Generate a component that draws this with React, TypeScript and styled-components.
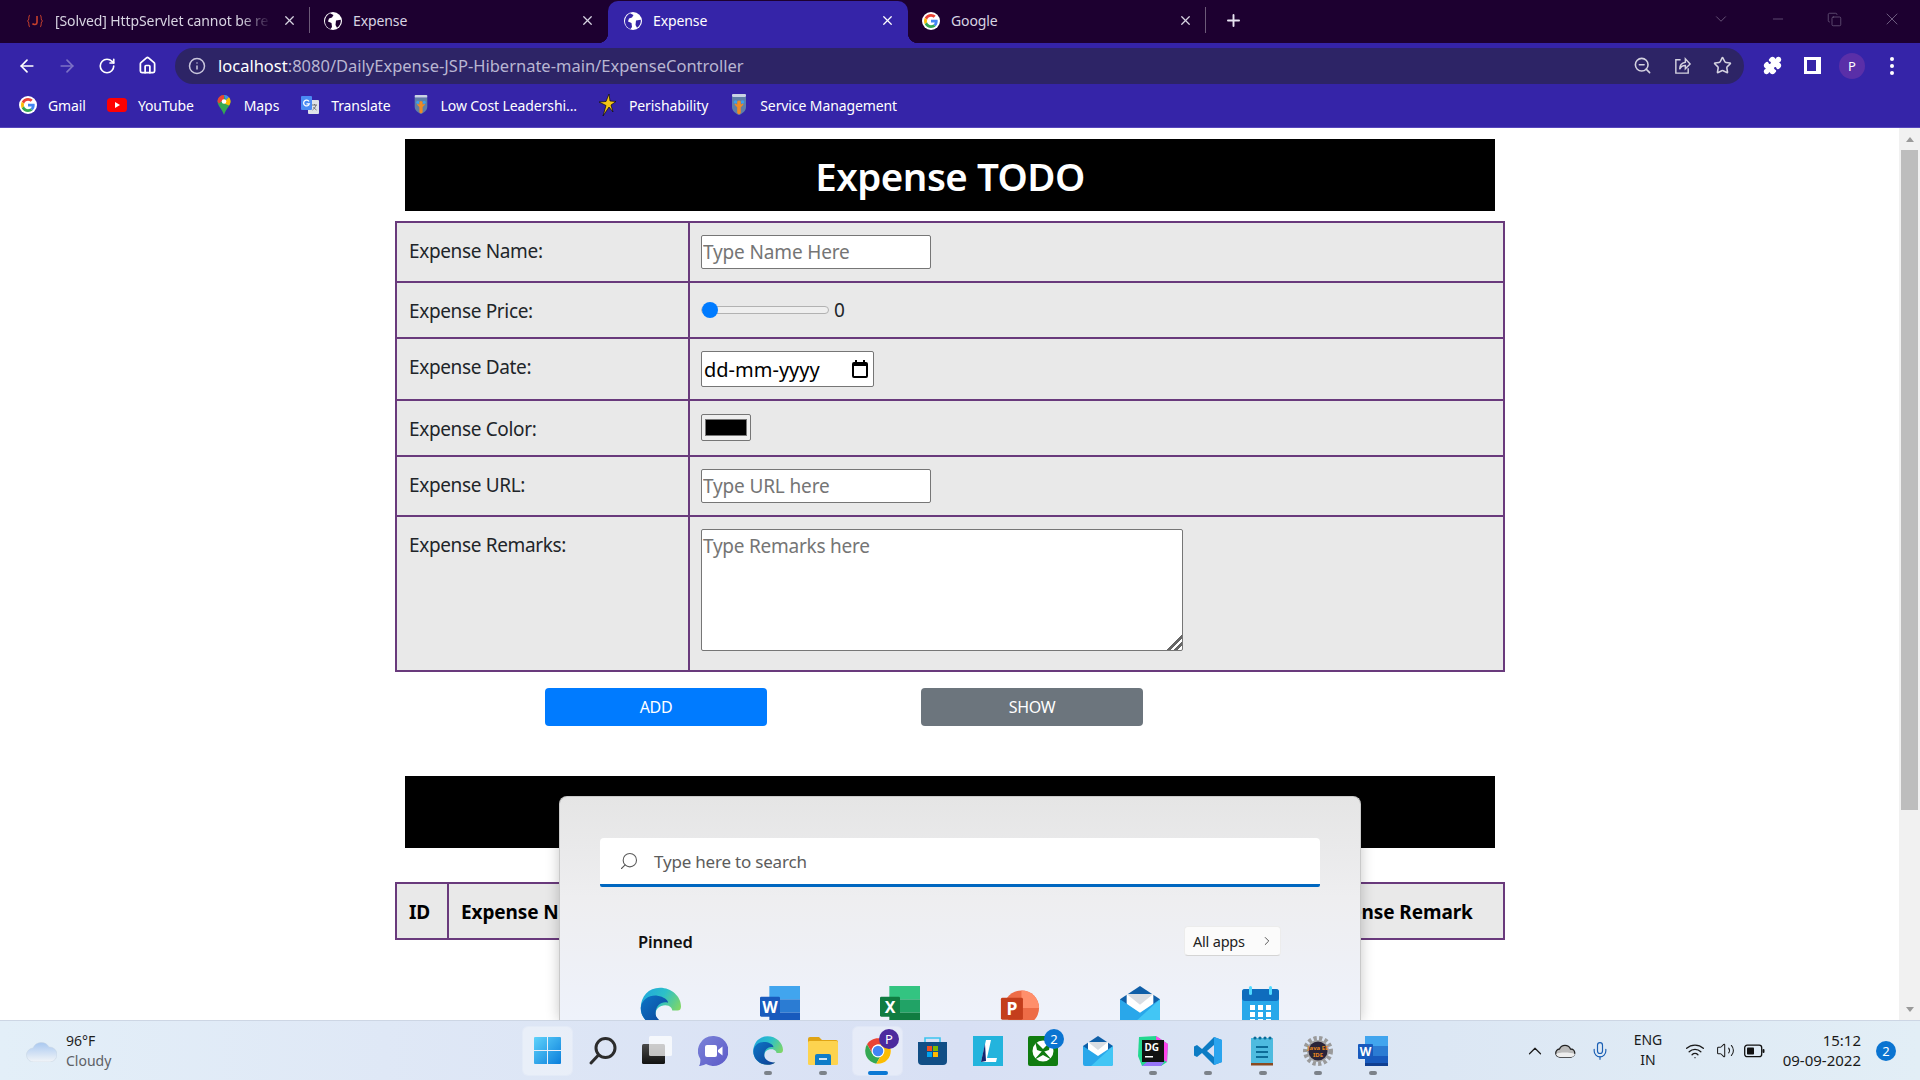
import React from "react";
import styled, { createGlobalStyle } from "styled-components";
import {
  ArrowLeft, ArrowRight, RotateCw, Home, Info, ZoomOut, Star, X, Plus, Minus, ChevronDown, ChevronUp, ChevronRight,
  Copy, Mic, Wifi, Volume2, Search, Puzzle,
} from "lucide-react";

const GlobalStyle = createGlobalStyle`
  html, body { margin: 0; padding: 0; height: 1080px; overflow: hidden; background: #fff; }
  * { box-sizing: border-box; }
  body { font-family: "Noto Sans", "Open Sans", sans-serif; }
`;

const Screen = styled.div`
  position: relative; width: 1920px; height: 1080px; overflow: hidden;
  display: flex; flex-direction: column; background: #fff;
`;

/* ---------- browser chrome ---------- */
const TabStrip = styled.div`
  height: 43px; flex: none; background: #1d0030; display: flex; padding: 1px 0 0 12px; color: #e8e4f2;
`;
const Tab = styled.div<{ $active?: boolean; $sep?: boolean; $w?: number }>`
  position: relative; width: ${p => p.$w ?? 298}px; height: 42px; display: flex; align-items: center; padding: 0 13px 3px ${p => (p.$active ? 16 : 14)}px; gap: 11px;
  font-size: 14px; letter-spacing: -0.1px;
  background: ${p => (p.$active ? "#3524a8" : "transparent")};
  border-radius: ${p => (p.$active ? "10px 10px 0 0" : "0")};
  color: ${p => (p.$active ? "#fff" : "#d8d4e2")};
  &::after {
    content: ""; position: absolute; right: 0; top: 6px; bottom: 10px; width: 1px;
    background: ${p => (p.$sep ? "#6c5a78" : "transparent")};
  }
`;
const TabFlare = styled.span<{ $side: "left" | "right" }>`
  position: absolute; bottom: 0; width: 10px; height: 10px;
  ${p => (p.$side === "left" ? "left: -10px" : "right: -10px")};
  background: radial-gradient(circle at ${p => (p.$side === "left" ? "0 0" : "100% 0")}, transparent 10px, #3524a8 10.5px);
`;
const TabTitle = styled.span<{ $fade?: boolean }>`
  flex: 1; white-space: nowrap; overflow: hidden;
  ${p => (p.$fade ? "mask-image: linear-gradient(90deg, #000 86%, transparent 100%);" : "")}
`;
const NewTab = styled.div`
  width: 54px; height: 42px; padding-bottom: 3px; display: flex; align-items: center; justify-content: center; color: #e8e4f2;
`;
const WindowControls = styled.div`
  margin: -2px 0 0 auto; display: flex; height: 40px; color: #7d6e8e;
`;
const WindowButton = styled.div`
  width: 57px; display: flex; align-items: center; justify-content: center;
`;

const Toolbar = styled.div`
  height: 45px; flex: none; background: #3524a8; display: flex; align-items: center; padding: 0 8px 0 7px; color: #fff;
`;
const ToolButton = styled.div<{ $dim?: boolean }>`
  width: 40px; height: 38px; flex: none; display: flex; align-items: center; justify-content: center;
  color: ${p => (p.$dim ? "#7d72c6" : "#fff")};
`;
const Omnibox = styled.div`
  flex: 1; margin: 0 8px; height: 36px; border-radius: 18px; background: #2d2466; display: flex; align-items: center;
  padding: 0 2px 0 13px; color: #c9c6dc;
`;
const UrlText = styled.div`
  margin-left: 12px; font-size: 16.5px; color: #b9b6d2; flex: 1; white-space: nowrap;
`;
const UrlHost = styled.span`color: #fff;`;
const OmniAction = styled.div`
  width: 40px; height: 32px; flex: none; display: flex; align-items: center; justify-content: center; color: #d4d2e0;
`;
const Avatar = styled.div`
  width: 26px; height: 26px; border-radius: 50%; background: #5a2fa8; color: #fff; font-size: 13px;
  display: flex; align-items: center; justify-content: center;
`;
const MenuDots = styled.div`
  display: flex; flex-direction: column; gap: 3px;
`;
const Dot = styled.span`
  width: 4px; height: 4px; border-radius: 50%; background: #fff;
`;
const PanelIcon = styled.div`
  width: 17px; height: 17px; border: 3px solid #fff; border-right-width: 5px; background: transparent;
`;

const BookmarkBar = styled.div`
  height: 40px; flex: none; background: #3524a8; border-bottom: 1px solid #5646bc; display: flex; align-items: center;
  padding: 0 0 5px 19px; gap: 21px; color: #fff; font-size: 14px; letter-spacing: -0.1px;
`;
const Bookmark = styled.div`
  display: flex; align-items: center; gap: 11px; white-space: nowrap;
`;

/* ---------- page ---------- */
const Viewport = styled.div`
  flex: 1; min-height: 0; display: flex; background: #fff;
`;
const Page = styled.main`
  flex: 1; overflow: hidden; display: flex; justify-content: center; align-items: flex-start; padding-left: 1px;
`;
const Container = styled.div`
  width: 1110px; padding-top: 11px; color: #212529; font-size: 19px; letter-spacing: -0.35px;
`;
const Heading = styled.h1`
  margin: 0 10px; height: 72px; background: #000; color: #fff; font-size: 38.5px; font-weight: 600; line-height: 74px; letter-spacing: -0.5px;
  text-align: center;
`;
const FormTable = styled.table`
  width: 100%; margin-top: 10px; border-collapse: collapse; table-layout: fixed; border: 2px solid #693a7c;
`;
const Row = styled.tr<{ $h: number }>`
  height: ${p => p.$h}px;
`;
const Cell = styled.td`
  border: 2px solid #693a7c; background: #e9e9e9; vertical-align: top; padding: 12px 11px 0;
`;
const LabelCell = styled(Cell)`
  width: 293px; line-height: 32px; padding-left: 12px;
`;
const TextField = styled.input`
  display: block; width: 230px; height: 34px; border: 1px solid #767676; border-radius: 2px; background: #fff; padding: 0 1px;
  font: inherit; letter-spacing: -0.15px; margin: 0;
  &::placeholder { color: #757575; opacity: 1; }
`;
const SliderRow = styled.div`
  height: 30px; display: flex; align-items: center; gap: 5px;
`;
const Slider = styled.input`
  appearance: none; -webkit-appearance: none; width: 128px; height: 16px; margin: 0; background: transparent;
  &::-webkit-slider-runnable-track { height: 8px; border: 1px solid #b2b2b2; border-radius: 4px; background: #efefef; }
  &::-webkit-slider-thumb { -webkit-appearance: none; width: 16px; height: 16px; margin-top: -5px; border-radius: 50%; background: #007bff; }
`;
const DateField = styled.div`
  width: 173px; height: 36px; border: 1px solid #767676; border-radius: 2px; background: #fff; display: flex; align-items: center;
  justify-content: space-between; padding: 0 5px 0 2px; color: #000; font-size: 20px; letter-spacing: 0;
`;
const ColorField = styled.div`
  width: 50px; height: 27px; margin-top: 1px; border: 1px solid #767676; border-radius: 2px; background: #efefef;
  padding: 4px 3px;
`;
const Swatch = styled.div`
  height: 100%; background: #000; border: 1px solid #777;
`;
const RemarksField = styled.textarea`
  display: block; width: 482px; height: 122px; border: 1px solid #767676; border-radius: 2px; background: #fff; padding: 0 1px;
  font: inherit; letter-spacing: -0.25px; margin: 0; line-height: 32px;
  &::placeholder { color: #757575; opacity: 1; }
  &::-webkit-resizer {
    background: linear-gradient(135deg, transparent 48%, #666 48%, #666 60%, transparent 60%, transparent 72%, #666 72%, #666 84%, transparent 84%);
  }
`;
const ActionRow = styled.div`
  display: flex; gap: 154px; margin-top: 16px; padding-left: 150px;
`;
const ActionButton = styled.button<{ $tone: string }>`
  width: 222px; height: 38px; border: 0; border-radius: 4px; background: ${p => p.$tone}; color: #fff; font: inherit;
  font-size: 16px; letter-spacing: -0.3px; padding: 0;
`;
const ListHeading = styled(Heading)`
  margin-top: 50px;
`;
const ListTable = styled.table`
  width: 100%; margin-top: 34px; border-collapse: collapse; table-layout: fixed; border: 2px solid #693a7c;
`;
const HeadCell = styled.th<{ $w?: number }>`
  ${p => (p.$w ? `width: ${p.$w}px;` : "")}
  height: 56px; border: 2px solid #693a7c; background: #e9e9e9; color: #000; font-weight: 700; font-size: 19px; letter-spacing: -0.1px; text-align: left; padding: 2px 12px 0; white-space: nowrap; overflow: hidden;
`;

/* ---------- scrollbar ---------- */
const Scrollbar = styled.div`
  width: 21px; flex: none; background: #f1f1f1; display: flex; flex-direction: column;
`;
const ScrollArrow = styled.div<{ $down?: boolean }>`
  height: 22px; flex: none; display: flex; align-items: center; justify-content: center;
  ${p => (p.$down ? "margin-top: auto;" : "")}
  &::before {
    content: ""; border-left: 4.5px solid transparent; border-right: 4.5px solid transparent;
    ${p => (p.$down ? "border-top: 5px solid #9a9a9a;" : "border-bottom: 5px solid #9a9a9a;")}
  }
`;
const ScrollThumb = styled.div`
  margin: 0 2px; height: 660px; background: #bdbdbd;
`;

/* ---------- start menu ---------- */
const StartMenu = styled.aside`
  position: absolute; left: 559px; bottom: 60px; width: 802px; height: 224px; overflow: hidden;
  border: 1px solid #c9c9c9; border-bottom: 0; border-radius: 8px 8px 0 0; padding: 41px 40px 0;
  background: linear-gradient(180deg, #e5e5e5 0%, #eeeef0 45%, #eef2fb 100%);
  box-shadow: 0 0 14px rgba(0,0,0,.22);
`;
const StartSearch = styled.div`
  height: 49px; background: #fff; border-radius: 4px 4px 2px 2px; border-bottom: 3px solid #0067c0; display: flex; align-items: center;
  padding: 0 0 0 19px; gap: 15px; font-size: 17px; letter-spacing: -0.2px; color: #5c5c5c;
`;
const PinnedHeader = styled.div`
  margin-top: 39px; height: 30px; display: flex; align-items: center; justify-content: space-between; padding: 0 39px 0 38px; color: #111;
  font-size: 16.5px; font-weight: 600; letter-spacing: -0.2px;
`;
const AllApps = styled.div`
  width: 97px; height: 30px; background: #fbfbfb; border: 1px solid #ececec; border-bottom-color: #d4d4d4; border-radius: 4px; display: flex; align-items: center;
  justify-content: space-between; padding: 0 6px 0 8px; font-size: 14.5px; font-weight: 400; letter-spacing: -0.2px; color: #222;
`;
const PinnedGrid = styled.div`
  margin-top: 30px; display: grid; grid-template-columns: repeat(6, 120px); justify-items: center;
`;

/* ---------- taskbar ---------- */
const Taskbar = styled.footer`
  height: 60px; flex: none; position: relative; display: grid; grid-template-columns: 1fr auto 1fr; align-items: center;
  background: linear-gradient(90deg, #e3eff8 0%, #dfe8f6 20%, #d8e0f4 50%, #dce7f4 75%, #e2eef6 100%);
  border-top: 1px solid #cdd6e4; color: #1a1a1a;
`;
const Weather = styled.div`
  display: flex; align-items: center; gap: 9px; padding-left: 26px; font-size: 14px; line-height: 20px;
`;
const WeatherText = styled.div`color: #1f1f1f;`;
const WeatherSub = styled.div`color: #5d6166;`;
const TaskIcons = styled.div`
  display: flex; gap: 6px;
`;
const TaskItem = styled.div<{ $active?: boolean }>`
  position: relative; width: 49px; height: 48px; display: flex; align-items: center; justify-content: center;
  border-radius: 5px;
  ${p => (p.$active ? "background: rgba(255,255,255,.35); box-shadow: 0 0 0 1px rgba(255,255,255,.2);" : "")}
`;
const RunDot = styled.span<{ $active?: boolean }>`
  position: absolute; bottom: 0; left: 50%; transform: translateX(-50%); height: 4px; border-radius: 2px;
  width: ${p => (p.$active ? 20 : 8)}px; background: ${p => (p.$active ? "#0b78d4" : "#7c8289")};
`;
const IconBadge = styled.span<{ $bg: string }>`
  position: absolute; top: 2px; right: 3px; width: 20px; height: 20px; border-radius: 50%; background: ${p => p.$bg};
  color: #fff; font-size: 13px; display: flex; align-items: center; justify-content: center;
`;
const Tray = styled.div`
  display: flex; align-items: center; justify-content: flex-end; padding-right: 9px; font-size: 14px;
`;
const TrayCell = styled.div<{ $w: number }>`
  width: ${p => p.$w}px; display: flex; align-items: center; justify-content: center;
`;
const TrayText = styled.div<{ $w: number; $right?: boolean; $size?: number }>`
  width: ${p => p.$w}px; margin-top: -2px; text-align: ${p => (p.$right ? "right" : "center")}; line-height: 20px; white-space: nowrap;
  font-size: ${p => p.$size ?? 14}px;
`;
const NoticeBadge = styled.div`
  width: 20px; height: 20px; border-radius: 50%; background: #0a74d1; color: #fff; font-size: 13px; display: flex; align-items: center; justify-content: center;
`;
const FlipSearch = styled(Search)`
  transform: scaleX(-1);
`;

/* ---------- drawn icons ---------- */
type P = { s?: number };
const Globe = ({ s = 18, c = "#1d0030" }: P & { c?: string }) => (
  <svg width={s} height={s} viewBox="0 0 18 18"><circle cx="9" cy="9" r="9" fill="#fff" /><path d="M6 1.2 9.5 3 8 5.5l-3 1-1 3 3.5 1.5L8 15l-1.5 2C3 16 1 12.6 1 9 1 5.8 3 2.8 6 1.2zM12 8.5l4.8-.7c.4 3-1 6.200-3.800 8L11.500 13z" fill={c} /></svg>
);
const GoogleG = ({ s = 18 }: P) => (
  <svg width={s} height={s} viewBox="-7 -7 62 62">
    <circle cx="24" cy="24" r="31" fill="#fff" />
    <path fill="#EA4335" d="M24 9.5c3.54 0 6.71 1.22 9.21 3.6l6.85-6.85C35.9 2.38 30.47 0 24 0 14.62 0 6.51 5.38 2.56 13.22l7.98 6.19C12.43 13.72 17.74 9.5 24 9.5z" />
    <path fill="#4285F4" d="M46.98 24.55c0-1.57-.15-3.09-.38-4.55H24v9.02h12.94c-.58 2.96-2.26 5.48-4.78 7.18l7.73 6c4.51-4.18 7.09-10.36 7.09-17.65z" />
    <path fill="#FBBC05" d="M10.53 28.59c-.48-1.45-.76-2.99-.76-4.59s.27-3.14.76-4.59l-7.98-6.19C.92 16.46 0 20.12 0 24c0 3.88.92 7.54 2.56 10.78l7.97-6.19z" />
    <path fill="#34A853" d="M24 48c6.48 0 11.93-2.13 15.89-5.81l-7.73-6c-2.15 1.45-4.92 2.3-8.16 2.3-6.26 0-11.57-4.22-13.47-9.91l-7.98 6.19C6.51 42.62 14.62 48 24 48z" />
  </svg>
);
const JFavicon = () => (
  <svg width="18" height="18" viewBox="0 0 18 18" fill="none" stroke="#c8402c" strokeWidth="1.6">
    <path d="M4 3C2.500 3 3 7 2.500 8 2.300 8.600 1.500 9 1.500 9s.8.400 1 1c.5 1 0 5 1.500 5" strokeWidth="1" />
    <path d="M14 3c1.500 0 1 4 1.500 5 .2.600 1 1 1 1s-.8.400-1 1c-.5 1 0 5-1.500 5" strokeWidth="1" />
    <path d="M11 4v6.500c0 2.500-3.500 2.500-4.500 1" />
  </svg>
);
const YouTube = () => (
  <svg width="20" height="14" viewBox="0 0 20 14"><rect width="20" height="14" rx="3.500" fill="#f00" /><path d="M8 4v6l5-3z" fill="#fff" /></svg>
);
const MapsPin = () => (
  <svg width="18" height="20" viewBox="0 0 18 20">
    <path d="M9 0a6.500 6.500 0 0 1 6.500 6.500c0 4.500-4.500 7-6.500 13.500C7 13.500 2.500 11 2.500 6.500A6.500 6.500 0 0 1 9 0z" fill="#34a853" />
    <path d="M4 2.200A6.500 6.500 0 0 1 9 0v4.500L4 8.500a5 5 0 0 1-1.500-2c0-1.700.5-3.100 1.500-4.300z" fill="#ea4335" />
    <path d="M9 0a6.500 6.500 0 0 1 5 2.200L11 5z" fill="#4285f4" /><path d="M14 2.200c1 1.200 1.500 2.600 1.500 4.300 0 1.500-.5 2.700-1.300 3.900L8 8z" fill="#fbbc04" />
    <circle cx="9" cy="6.500" r="2.300" fill="#fff" />
  </svg>
);
const TranslateIcon = () => (
  <svg width="20" height="20" viewBox="0 0 20 20">
    <rect x="8" y="5" width="11" height="14" rx="1" fill="#dfe3e8" /><rect x="1" y="1" width="11" height="14" rx="1" fill="#4a8af4" />
    <path d="M9 6.500a2.900 2.900 0 1 0 .3 2.400H6.500" fill="none" stroke="#fff" strokeWidth="1.300" /><path d="M12 10h5M14.500 9v1M16 10c-.5 2-2 4-3.500 5M13.500 12c.5 1 1.500 2 3 3" stroke="#666" strokeWidth=".9" fill="none" />
  </svg>
);
const ShieldPerson = ({ s = 20 }: P) => (
  <svg width={s} height="22" viewBox="0 0 20 22">
    <rect x="3" y="0" width="14" height="3" rx="1" fill="#c9d4e4" />
    <path d="M3 3h14v10c0 4-3.500 6.500-7 8-3.500-1.500-7-4-7-8z" fill="#5f7ea8" />
    <circle cx="6.500" cy="8" r="1.800" fill="#3aa0ee" /><circle cx="13.500" cy="8" r="1.800" fill="#3aa0ee" />
    <path d="M10 6.500c1.200 0 1.800.8 1.800 1.800v2.500l1.700-1.300 1 1-2.700 2.700V19L10 20.500 8.200 19v-5.800L5.500 10.500l1-1 1.700 1.300V8.300c0-1 .6-1.800 1.800-1.800z" fill="#f08a24" />
  </svg>
);
const PerishIcon = () => (
  <svg width="20" height="22" viewBox="0 0 18 22"><path d="M10 0l1 7 6 .5-5 3.500 2 7-4-5-6 9 3-10.500L0 8l7-.5z" fill="#f3c316" stroke="#0a0a0a" strokeWidth=".7" /></svg>
);
const ShareIcon = () => (
  <svg width="19" height="19" viewBox="0 0 20 20" fill="none" stroke="currentColor" strokeWidth="1.500"><path d="M8 4H3v14h13v-5" /><path d="M7 14c0-5 3-7 6-7.500V3l5 5.500-5 5V10c-3 0-5 1.500-6 4z" /></svg>
);
const WindowsLogo = () => (
  <svg width="29" height="29" viewBox="0 0 29 29"><defs><linearGradient id="w1" x1="0" y1="0" x2="1" y2="1"><stop offset="0" stopColor="#5fd3fb" /><stop offset="1" stopColor="#0a7edb" /></linearGradient></defs><path d="M1 2a1 1 0 0 1 1-1h12v13H1zM15 1h12a1 1 0 0 1 1 1v12H15zM1 15h13v13H2a1 1 0 0 1-1-1zM15 15h13v12a1 1 0 0 1-1 1H15z" fill="url(#w1)" /></svg>
);
const SearchGlass = () => (
  <svg width="30" height="30" viewBox="0 0 30 30" fill="none" stroke="#2c2c2c" strokeWidth="3" strokeLinecap="round"><circle cx="17.500" cy="12" r="9.500" /><path d="M10.500 19 3 27" /></svg>
);
const TaskView = () => (
  <svg width="31" height="29" viewBox="0 0 31 29"><defs><linearGradient id="tv" x1="0" y1="0" x2="0" y2="1"><stop offset="0" stopColor="#4a4a4a" /><stop offset="1" stopColor="#111" /></linearGradient></defs><rect x="0" y="8" width="23" height="20" rx="1.500" fill="url(#tv)" /><rect x="7" y="0" width="23" height="20" rx="1.500" fill="#fff" fillOpacity=".72" /></svg>
);
const ChatIcon = () => (
  <svg width="30" height="30" viewBox="0 0 30 30"><defs><linearGradient id="ch" x1="0" y1="0" x2="1" y2="1"><stop offset="0" stopColor="#7b83d8" /><stop offset="1" stopColor="#5c5ac8" /></linearGradient></defs><path d="M15 0a15 15 0 1 1-7 28c-3 1.500-6 2-7 2 1-1 1.500-4 1.300-7A15 15 0 0 1 15 0z" fill="url(#ch)" /><rect x="7" y="9" width="12" height="12" rx="2" fill="#fff" /><path d="M20 14l4.500-3.500v9L20 16z" fill="#fff" /></svg>
);
const EdgeIcon = ({ s = 31 }: P) => (
  <svg width={s} height={s} viewBox="0 0 48 48">
    <defs>
      <linearGradient id="e1" x1="0" y1="0" x2="1" y2=".6"><stop offset="0" stopColor="#1fa3e0" /><stop offset=".5" stopColor="#2cc0c8" /><stop offset="1" stopColor="#8ad95a" /></linearGradient>
      <linearGradient id="e2" x1="0" y1="0" x2="1" y2="1"><stop offset="0" stopColor="#0c75c6" /><stop offset="1" stopColor="#0f3f94" /></linearGradient>
    </defs>
    <path d="M24 2C11 2 2 12 2 25c0 12 10 21 22 21 5 0 9-1.500 12-3.500C28 45 20 41 19 34c-1-7 4-12 11-12 6 0 8 4 8 6h6c3 0 4-2 4-5C48 12 37 2 24 2z" fill="url(#e1)" />
    <path d="M2 25C3 15 12 10 21 11c8 1 13 6 12 8-6-2-14 2-14 12 0 6 6 12 17 11.500C33 45 29 46 24 46 12 46 2 37 2 25z" fill="url(#e2)" />
  </svg>
);
const FolderIcon = () => (
  <svg width="30" height="28" viewBox="0 0 30 28"><path d="M0 2a2 2 0 0 1 2-2h9l3 3h14a2 2 0 0 1 2 2v6H0z" fill="#e0a414" /><rect y="4" width="30" height="24" rx="1.500" fill="#fdd34f" /><path d="M7 19a2 2 0 0 1 2-2h12a2 2 0 0 1 2 2v9H7z" fill="#0e7cc8" /><rect x="11" y="21" width="8" height="2" fill="#fff" fillOpacity=".8" /></svg>
);
const ChromeLogo = ({ s = 28 }: P) => (
  <svg width={s} height={s} viewBox="0 0 48 48">
    <circle cx="24" cy="24" r="22" fill="#fff" />
    <path d="M24 2C16 2 9 6 5.200 12.600l9.500 16.400A11 11 0 0 1 24 13h19.100C39.300 6.400 32.200 2 24 2z" fill="#ea4335" />
    <path d="M5.200 12.600A22 22 0 0 0 21 45.800l9.500-16.500A11 11 0 0 1 14.700 29z" fill="#34a853" />
    <path d="M43.100 13H24a11 11 0 0 1 6.500 16.300L21 45.800c1 .1 2 .2 3 .2 12.200 0 22-9.800 22-22 0-3.900-1-7.700-2.900-11z" fill="#fbbc04" />
    <circle cx="24" cy="24" r="11" fill="#fff" /><circle cx="24" cy="24" r="9" fill="#4285f4" />
  </svg>
);
const StoreIcon = () => (
  <svg width="29" height="29" viewBox="0 0 29 29"><path d="M7 6V2h15v4" fill="none" stroke="#3cc4ee" strokeWidth="1.600" /><path d="M0 6h29v19a4 4 0 0 1-4 4H4a4 4 0 0 1-4-4z" fill="#114e85" /><rect x="9" y="10" width="5" height="5" fill="#f25022" /><rect x="15" y="10" width="5" height="5" fill="#7fba00" /><rect x="9" y="16" width="5" height="5" fill="#00a4ef" /><rect x="15" y="16" width="5" height="5" fill="#ffb900" /></svg>
);
const LIcon = () => (
  <svg width="30" height="30" viewBox="0 0 30 30"><rect width="30" height="30" fill="#23b4dd" /><path d="M8 26 13 4h5l-4 18h10l-1 4z" fill="#fff" /><path d="M8 26 12 8l1 17z" fill="#13246e" /></svg>
);
const XboxIcon = () => (
  <svg width="30" height="30" viewBox="0 0 30 30"><rect width="30" height="30" rx="2" fill="#107c10" /><circle cx="15" cy="15" r="10.500" fill="#fff" /><path d="M7 5l8 8 8-8-2 9-6 2-6-2zM6 24l9-10 9 10-9-5z" fill="#107c10" /></svg>
);
const MailIcon = ({ s = 30 }: P) => (
  <svg width={s} height={s} viewBox="0 0 30 30"><path d="M0 10 15 0l15 10v5H0z" fill="#0f5fa8" /><path d="M5 6h20v14H5z" fill="#fff" /><path d="M5 6h20L15 14z" fill="#d9dde2" /><path d="M0 10l15 10 15-10v18a2 2 0 0 1-2 2H2a2 2 0 0 1-2-2z" fill="#29a7ea" /><path d="M30 10v18a2 2 0 0 1-2 2H8z" fill="#42c6f5" /></svg>
);
const DataGrip = () => (
  <svg width="30" height="30" viewBox="0 0 30 30">
    <path d="M1 1l17-1 12 8-1 18-6 4H4L0 20z" fill="#22d88f" /><path d="M18 0l12 8-1 18-10-6z" fill="#ff45ed" /><path d="M4 30l10-8 12 4-3 4z" fill="#9775f8" />
    <rect x="4" y="4" width="22" height="22" fill="#111" />
    <text x="6.500" y="15" fontSize="10" fontWeight="700" fill="#fff" fontFamily="Noto Sans, sans-serif">DG</text><rect x="7" y="20" width="8" height="1.500" fill="#fff" />
  </svg>
);
const VSCode = () => (
  <svg width="30" height="30" viewBox="0 0 30 30"><path d="M21 1 29 4v22l-8 3-12-12-5 4-3-1.500v-9L4 9l5 4z" fill="#0c7cc4" /><path d="M21 1 29 4v22l-8 3z" fill="#2aa4ee" /><path d="M21 9v12l-7-6z" fill="#d8e0f4" /></svg>
);
const Notepad = () => (
  <svg width="24" height="30" viewBox="0 0 24 30"><rect y="2" width="22" height="26" fill="#4ebbdf" /><rect y="27" width="22" height="2.500" fill="#8a4a20" /><rect x="5" y="10" width="12" height="2" fill="#0c6c98" /><rect x="5" y="15" width="12" height="2" fill="#0c6c98" /><rect x="5" y="20" width="12" height="2" fill="#0c6c98" /><circle cx="4" cy="2" r="1.600" fill="#0c6c98" /><circle cx="9" cy="2" r="1.600" fill="#0c6c98" /><circle cx="14" cy="2" r="1.600" fill="#0c6c98" /><circle cx="19" cy="2" r="1.600" fill="#0c6c98" /></svg>
);
const JavaEE = () => (
  <svg width="30" height="30" viewBox="0 0 30 30">
    <circle cx="15" cy="15" r="12" fill="none" stroke="#9a9a9a" strokeWidth="6" strokeDasharray="3 2.200" /><circle cx="15" cy="15" r="11" fill="#a5a5a5" /><circle cx="15" cy="15" r="9.500" fill="#2a2438" />
    <text x="15" y="13.500" fontSize="6" fontWeight="700" fill="#e8871e" textAnchor="middle" fontFamily="Noto Sans, sans-serif">Java EE</text>
    <text x="15" y="20.500" fontSize="6" fontWeight="700" fill="#e8871e" textAnchor="middle" fontFamily="Noto Sans, sans-serif">IDE</text>
  </svg>
);
const OfficeApp = ({ s = 30, a, b, c, d, tile, letter }: P & { a: string; b: string; c: string; d: string; tile: string; letter: string }) => (
  <svg width={s} height={s} viewBox="0 0 30 30">
    <rect x="7" y="0" width="23" height="10" fill={a} /><rect x="7" y="10" width="23" height="10" fill={b} /><rect x="7" y="20" width="23" height="10" fill={c} />
    <rect x="0" y="8" width="15" height="15" rx="1" fill={tile} />
    <text x="7.500" y="20" fontSize="12" fontWeight="700" fill="#fff" textAnchor="middle" fontFamily="Noto Sans, sans-serif">{letter}</text>
    <rect x="7" y="27" width="23" height="3" fill={d} />
  </svg>
);
const WordIcon = ({ s = 30 }: P) => <OfficeApp s={s} a="#41a5ee" b="#2b7cd3" c="#185abd" d="#103f91" tile="#185abd" letter="W" />;
const ExcelIcon = ({ s = 30 }: P) => <OfficeApp s={s} a="#33c481" b="#21a366" c="#107c41" d="#185c37" tile="#107c41" letter="X" />;
const PowerPoint = ({ s = 40 }: P) => (
  <svg width={s} height={s} viewBox="2 0 30 30"><circle cx="18" cy="15" r="12" fill="#ed6c47" /><path d="M18 3a12 12 0 0 1 12 12H18z" fill="#ff8f6b" /><rect x="4" y="8" width="15" height="15" rx="1" fill="#c43e1c" /><text x="11.500" y="20" fontSize="12" fontWeight="700" fill="#fff" textAnchor="middle" fontFamily="Noto Sans, sans-serif">P</text></svg>
);
const CalendarApp = () => (
  <svg width="37" height="44" viewBox="0 0 37 44">
    <rect y="3" width="37" height="41" rx="3" fill="#28a8ea" /><rect y="3" width="37" height="12" rx="3" fill="#0f6cbd" />
    <rect x="7" width="3" height="9" rx="1.500" fill="#50d9ff" /><rect x="27" width="3" height="9" rx="1.500" fill="#50d9ff" />
    {[0, 1, 2, 3].map(r => [0, 1, 2].map(c => <rect key={`${r}${c}`} x={8 + c * 8} y={19 + r * 7} width="5" height="5" fill="#fff" />))}
  </svg>
);
const CloudWeather = () => (
  <svg width="31" height="22" viewBox="0 0 31 22"><defs><linearGradient id="cw" x1="0" y1="0" x2="0" y2="1"><stop offset="0" stopColor="#a9c8f0" /><stop offset="1" stopColor="#f2f5f8" /></linearGradient></defs><path d="M8 22a7 7 0 0 1-1-14A9 9 0 0 1 23 7a7.500 7.500 0 0 1 1 15z" fill="url(#cw)" stroke="#c5d2e0" strokeWidth=".5" /></svg>
);
const OneDrive = () => (
  <svg width="21" height="14" viewBox="0 0 21 14" stroke="#222" strokeWidth="1.300"><path d="M5 13a4 4 0 0 1-.5-8A6 6 0 0 1 15.500 5a4 4 0 0 1 .5 8z" fill="#bbb" /><path d="M1 10c3-2 14-2 19 0-.5 2-2 3-4 3H5c-2 0-3.500-1-4-3z" fill="#eee" stroke="none" /></svg>
);
const Battery = () => (
  <svg width="21" height="14" viewBox="0 0 21 14"><rect x=".7" y="1.200" width="17" height="11.500" rx="2.500" fill="none" stroke="#111" strokeWidth="1.300" /><rect x="3" y="3.500" width="7" height="7" rx=".8" fill="#111" /><rect x="18.500" y="5" width="2" height="4" rx="1" fill="#111" /></svg>
);
const CalendarGlyph = () => (
  <svg width="16" height="18" viewBox="0 0 16 18"><path d="M3 0h2v2h6V0h2v2h1a2 2 0 0 1 2 2v12a2 2 0 0 1-2 2H2a2 2 0 0 1-2-2V4a2 2 0 0 1 2-2h1zM2 6v10h12V6z" fill="#000" /></svg>
);

const bookmarks: [React.ReactNode, string][] = [
  [<GoogleG key="g" />, "Gmail"],
  [<YouTube key="y" />, "YouTube"],
  [<MapsPin key="m" />, "Maps"],
  [<TranslateIcon key="t" />, "Translate"],
  [<ShieldPerson key="s" s={18} />, "Low Cost Leadershi..."],
  [<PerishIcon key="p" />, "Perishability"],
  [<ShieldPerson key="s2" />, "Service Management"],
];

type TaskDef = { icon: React.ReactNode; dot?: boolean; active?: boolean; badge?: [string, string] };
const taskItems: TaskDef[] = [
  { icon: <WindowsLogo />, active: true },
  { icon: <SearchGlass /> },
  { icon: <TaskView /> },
  { icon: <ChatIcon /> },
  { icon: <EdgeIcon />, dot: true },
  { icon: <FolderIcon />, dot: true },
  { icon: <ChromeLogo />, dot: true, active: true, badge: ["P", "#4c2a9e"] },
  { icon: <StoreIcon /> },
  { icon: <LIcon /> },
  { icon: <XboxIcon />, badge: ["2", "#0a74d1"] },
  { icon: <MailIcon /> },
  { icon: <DataGrip />, dot: true },
  { icon: <VSCode />, dot: true },
  { icon: <Notepad />, dot: true },
  { icon: <JavaEE />, dot: true },
  { icon: <WordIcon />, dot: true },
];

export default function App() {
  return (
    <Screen>
      <GlobalStyle />
      <TabStrip>
        <Tab $sep>
          <JFavicon />
          <TabTitle $fade>[Solved] HttpServlet cannot be re</TabTitle>
          <X size={15} />
        </Tab>
        <Tab>
          <Globe />
          <TabTitle>Expense</TabTitle>
          <X size={15} />
        </Tab>
        <Tab $active $w={300}>
          <TabFlare $side="left" />
          <Globe c="#3524a8" />
          <TabTitle>Expense</TabTitle>
          <X size={15} />
          <TabFlare $side="right" />
        </Tab>
        <Tab $sep>
          <GoogleG />
          <TabTitle>Google</TabTitle>
          <X size={15} />
        </Tab>
        <NewTab><Plus size={19} strokeWidth={2.4} /></NewTab>
        <WindowControls>
          <WindowButton><ChevronDown size={18} strokeWidth={1} /></WindowButton>
          <WindowButton><Minus size={16} strokeWidth={1} /></WindowButton>
          <WindowButton><Copy size={15} strokeWidth={1} /></WindowButton>
          <WindowButton><X size={20} strokeWidth={1} /></WindowButton>
        </WindowControls>
      </TabStrip>
      <Toolbar>
        <ToolButton><ArrowLeft size={20} /></ToolButton>
        <ToolButton $dim><ArrowRight size={20} /></ToolButton>
        <ToolButton><RotateCw size={18} strokeWidth={2.2} /></ToolButton>
        <ToolButton><Home size={19} strokeWidth={2.2} /></ToolButton>
        <Omnibox>
          <Info size={18} />
          <UrlText><UrlHost>localhost</UrlHost>:8080/DailyExpense-JSP-Hibernate-main/ExpenseController</UrlText>
          <OmniAction><ZoomOut size={19} /></OmniAction>
          <OmniAction><ShareIcon /></OmniAction>
          <OmniAction><Star size={19} /></OmniAction>
        </Omnibox>
        <ToolButton><Puzzle size={19} fill="#fff" /></ToolButton>
        <ToolButton><PanelIcon /></ToolButton>
        <ToolButton><Avatar>P</Avatar></ToolButton>
        <ToolButton><MenuDots><Dot /><Dot /><Dot /></MenuDots></ToolButton>
      </Toolbar>
      <BookmarkBar>
        {bookmarks.map(([icon, label]) => (
          <Bookmark key={label}>{icon}{label}</Bookmark>
        ))}
      </BookmarkBar>

      <Viewport>
        <Page>
          <Container>
            <Heading>Expense TODO</Heading>
            <FormTable>
              <tbody>
                <Row $h={60}>
                  <LabelCell>Expense Name:</LabelCell>
                  <Cell><TextField placeholder="Type Name Here" /></Cell>
                </Row>
                <Row $h={56}>
                  <LabelCell>Expense Price:</LabelCell>
                  <Cell><SliderRow><Slider type="range" min={0} max={100} defaultValue={0} /><span>0</span></SliderRow></Cell>
                </Row>
                <Row $h={62}>
                  <LabelCell>Expense Date:</LabelCell>
                  <Cell><DateField>dd-mm-yyyy<CalendarGlyph /></DateField></Cell>
                </Row>
                <Row $h={56}>
                  <LabelCell>Expense Color:</LabelCell>
                  <Cell><ColorField><Swatch /></ColorField></Cell>
                </Row>
                <Row $h={60}>
                  <LabelCell>Expense URL:</LabelCell>
                  <Cell><TextField placeholder="Type URL here" /></Cell>
                </Row>
                <Row $h={155}>
                  <LabelCell>Expense Remarks:</LabelCell>
                  <Cell><RemarksField placeholder="Type Remarks here" /></Cell>
                </Row>
              </tbody>
            </FormTable>
            <ActionRow>
              <ActionButton $tone="#007bff">ADD</ActionButton>
              <ActionButton $tone="#6c757d">SHOW</ActionButton>
            </ActionRow>
            <ListHeading>Expense List</ListHeading>
            <ListTable>
              <thead>
                <tr>
                  <HeadCell $w={52}>ID</HeadCell>
                  <HeadCell>Expense Name</HeadCell>
                  <HeadCell>Expense Price</HeadCell>
                  <HeadCell>Expense Date</HeadCell>
                  <HeadCell>Expense Color</HeadCell>
                  <HeadCell>Expense URL</HeadCell>
                  <HeadCell $w={200}>Expense Remark</HeadCell>
                </tr>
              </thead>
            </ListTable>
          </Container>
        </Page>
        <Scrollbar>
          <ScrollArrow />
          <ScrollThumb />
          <ScrollArrow $down />
        </Scrollbar>
      </Viewport>

      <StartMenu>
        <StartSearch>
          <FlipSearch size={20} strokeWidth={1.3} />
          Type here to search
        </StartSearch>
        <PinnedHeader>
          Pinned
          <AllApps>All apps<ChevronRight size={14} strokeWidth={1.3} /></AllApps>
        </PinnedHeader>
        <PinnedGrid>
          <EdgeIcon s={42} />
          <WordIcon s={40} />
          <ExcelIcon s={40} />
          <PowerPoint s={44} />
          <MailIcon s={40} />
          <CalendarApp />
        </PinnedGrid>
      </StartMenu>

      <Taskbar>
        <Weather>
          <CloudWeather />
          <div>
            <WeatherText>96°F</WeatherText>
            <WeatherSub>Cloudy</WeatherSub>
          </div>
        </Weather>
        <TaskIcons>
          {taskItems.map((t, i) => (
            <TaskItem key={i} $active={t.active}>
              {t.icon}
              {t.badge && <IconBadge $bg={t.badge[1]}>{t.badge[0]}</IconBadge>}
              {t.dot && <RunDot $active={t.active} />}
            </TaskItem>
          ))}
        </TaskIcons>
        <Tray>
          <TrayCell $w={30}><ChevronUp size={22} strokeWidth={1.3} /></TrayCell>
          <TrayCell $w={30}><OneDrive /></TrayCell>
          <TrayCell $w={40}><Mic size={20} strokeWidth={1.4} color="#1a5fb4" /></TrayCell>
          <TrayText $w={56}>ENG<br />IN</TrayText>
          <TrayCell $w={38}><Wifi size={20} strokeWidth={1.6} /></TrayCell>
          <TrayCell $w={22}><Volume2 size={19} strokeWidth={1.3} /></TrayCell>
          <TrayCell $w={36}><Battery /></TrayCell>
          <TrayText $w={89} $right $size={15}>15:12<br />09-09-2022</TrayText>
          <TrayCell $w={50}><NoticeBadge>2</NoticeBadge></TrayCell>
        </Tray>
      </Taskbar>
    </Screen>
  );
}
